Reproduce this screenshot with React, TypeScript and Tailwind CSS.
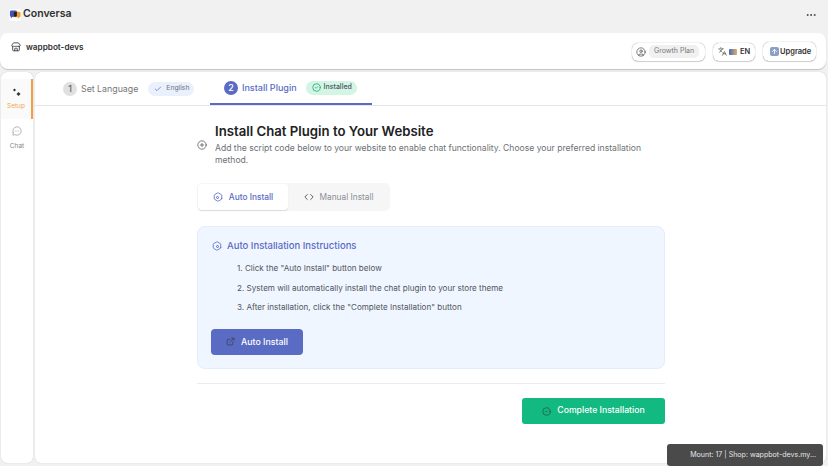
import { Check, CircleCheck, CirclePlus, CircleUser, Code, Ellipsis, ExternalLink, Hexagon, Languages, MessageCircleMore, Store, ArrowUp } from "lucide-react";

const steps = [
  'Click the "Auto Install" button below',
  "System will automatically install the chat plugin to your store theme",
  'After installation, click the "Complete Installation" button',
];

// hex nut icon used on the auto install labels
const NutIcon = ({ size = 10 }: { size?: number }) => (
  <span className="relative flex items-center justify-center" style={{ width: size, height: size }}>
    <Hexagon size={size} strokeWidth={2} />
    <span className="absolute h-[3px] w-[3px] rounded-full border border-current" />
  </span>
);

const App = () => {
  return (
    <div className="relative h-[466px] w-[828px] overflow-hidden bg-[#f1f1f1] font-['Inter',sans-serif] text-[#202223]">
      {/* Top bar */}
      <div className="flex h-[29px] items-center justify-between pl-[9px] pr-[11px]">
        <div className="flex items-center gap-[2px]">
          <svg width="12" height="12" viewBox="0 0 13 13">
            <rect width="13" height="13" rx="3" fill="#fff" />
            <path d="M1 3a1.500 1.500 0 0 1 1.500-1.500H7A1.500 1.500 0 0 1 8.500 3v4A1.500 1.500 0 0 1 7 8.500H4L2 10V8.500A1.500 1.500 0 0 1 1 7z" fill="#3f51c8" />
            <path d="M5 4.500A1.500 1.500 0 0 1 6.500 3h4.500A1.500 1.500 0 0 1 12.500 4.500v3A1.500 1.500 0 0 1 11 9v1.500L9.500 9h-3A1.500 1.500 0 0 1 5 7.500z" fill="#f09a2e" />
            <path d="M5 4.500A1.500 1.500 0 0 1 6.500 3H8.500v4A1.500 1.500 0 0 1 7 8.500H5z" fill="#222" />
          </svg>
          <span className="text-[10.500px] font-semibold leading-none text-[#303030]">Conversa</span>
        </div>
        <Ellipsis size={12} strokeWidth={2} className="text-[#444]" />
      </div>

      {/* Store header */}
      <div className="mt-[4px] flex h-[36px] w-[826px] items-start justify-between rounded-[8px] bg-white pl-[11px] pr-[10px] pt-[7px] shadow-[0_1px_1px_rgba(0,0,0,0.2)]">
        <div className="flex items-center gap-[5px] pt-[1px]">
          <Store size={10} strokeWidth={2} className="text-[#333]" />
          <span className="text-[8.200px] font-semibold text-[#303030]">wappbot-devs</span>
        </div>
        <div className="flex items-center gap-[8px] pt-[2px]">
          <div className="flex h-[18px] w-[73px] items-center gap-[3px] rounded-[6px] bg-white pl-[4px] shadow-[0_0_1px_rgba(0,0,0,0.5),0_1px_1px_rgba(0,0,0,0.15)]">
            <CircleUser size={10} strokeWidth={1.500} className="text-[#333]" />
            <span className="rounded-[5px] bg-[#f0f0f0] px-[5px] py-[1px] text-[7px] text-[#777]">Growth Plan</span>
          </div>
          <div className="flex h-[18px] w-[42px] items-center gap-[2px] rounded-[6px] bg-white pl-[5px] shadow-[0_0_1px_rgba(0,0,0,0.5),0_1px_1px_rgba(0,0,0,0.15)]">
            <Languages size={9} strokeWidth={1.800} className="text-[#444]" />
            <span className="h-[6px] w-[8px] rounded-[1px] bg-gradient-to-r from-[#4a62b8] to-[#e0b050]" />
            <span className="ml-[1px] text-[7.500px] font-semibold text-[#303030]">EN</span>
          </div>
          <div className="flex h-[19px] w-[53px] items-center gap-[1px] rounded-[6px] bg-white pl-[7px] shadow-[0_0_1px_rgba(0,0,0,0.5),0_1px_1px_rgba(0,0,0,0.15)]">
            <span className="flex h-[9px] w-[9px] items-center justify-center rounded-[2px] bg-[#8aa0c8]">
              <ArrowUp size={7} strokeWidth={3} className="text-white" />
            </span>
            <span className="text-[7.500px] font-semibold text-[#303030]">Upgrade</span>
          </div>
        </div>
      </div>

      <div className="mt-[3px] flex h-[391px] gap-[2px] pl-[1px]">
        {/* Sidebar */}
        <div className="w-[32px] rounded-[6px] bg-white pt-[7px] shadow-[0_0_1px_rgba(0,0,0,0.25)]">
          <div className="flex h-[40px] flex-col items-center border-r-2 border-[#f0a040] bg-[#fafafa] pt-[9px]">
            <svg width="9" height="9" viewBox="0 0 9 9" fill="#333">
              <path d="M2.500 0.500 4 2 2.500 3.500 1 2z" />
              <path d="M6.500 4 8.500 6 6.500 8 4.500 6z" />
            </svg>
            <span className="mt-[6px] text-[6.500px] leading-none text-[#eda850]">Setup</span>
          </div>
          <div className="mt-[7px] flex flex-col items-center gap-[7px]">
            <MessageCircleMore size={10} strokeWidth={1.300} className="text-[#777]" />
            <span className="text-[6.500px] leading-none text-[#888]">Chat</span>
          </div>
        </div>

        {/* Main panel */}
        <div className="w-[791px] rounded-[6px] bg-white shadow-[0_0_1px_rgba(0,0,0,0.25)]">
          <div className="flex h-[34px] items-stretch border-b border-[#e6e6e6] pl-[28px]">
            <div className="flex w-[147px] items-center">
              <span className="flex h-[14px] w-[14px] items-center justify-center rounded-full bg-[#e0e0e0] text-[9px] font-medium text-[#666]">1</span>
              <span className="ml-[4px] text-[8.800px] text-[#777]">Set Language</span>
              <span className="ml-[10px] flex h-[14px] items-center gap-[4px] rounded-full bg-[#eaf1fd] pl-[6px] pr-[5px] text-[6.800px] text-[#6b7280]">
                <Check size={8} strokeWidth={2} className="text-[#4f5fb8]" />
                English
              </span>
            </div>
            <div className="flex w-[162px] items-center border-b-2 border-[#5a6bc4] pl-[14px]">
              <span className="flex h-[14px] w-[14px] items-center justify-center rounded-full bg-[#5a6bc4] text-[9px] font-medium text-white">2</span>
              <span className="ml-[4px] text-[9px] font-medium text-[#5a6bc4]">Install Plugin</span>
              <span className="ml-[9px] flex h-[14px] items-center gap-[3px] rounded-full bg-[#d3f5e4] pl-[6px] pr-[5px] text-[7px] font-medium text-[#4b5563]">
                <CircleCheck size={9} strokeWidth={2} className="text-[#12a36f]" />
                Installed
              </span>
            </div>
          </div>

          <div className="ml-[162px] w-[468px] pt-[17px]">
            <div className="flex items-center gap-[7px]">
              <CirclePlus size={10} strokeWidth={1.500} className="text-[#333]" />
              <div>
                <h1 className="ml-[1px] text-[13.200px] font-semibold leading-[17px] text-[#202223]">Install Chat Plugin to Your Website</h1>
                <p className="ml-[1px] mt-[2px] w-[440px] text-[8.580px] leading-[12px] text-[#6d7175]">
                  Add the script code below to your website to enable chat functionality. Choose your preferred installation method.
                </p>
              </div>
            </div>

            <div className="mt-[17px] flex h-[28px] w-[193px] rounded-[5px] bg-[#f6f6f7] p-[1px]">
              <div className="flex w-[90px] items-center justify-center gap-[6px] rounded-[4px] bg-white text-[8.300px] font-medium text-[#5a6bc4] shadow-[0_1px_1px_rgba(0,0,0,0.12)]">
                <NutIcon />
                Auto Install
              </div>
              <div className="flex flex-1 items-center justify-center gap-[6px] text-[8.300px] text-[#8a8f94]">
                <Code size={10} strokeWidth={2} className="text-[#444]" />
                Manual Install
              </div>
            </div>

            <div className="mt-[15px] h-[143px] rounded-[8px] border border-[#e4edfb] bg-[#f0f6ff] pl-[13px] pt-[12px]">
              <div className="flex items-center gap-[5px] pl-[1px] text-[9.500px] font-medium text-[#5a6bc4]">
                <NutIcon />
                Auto Installation Instructions
              </div>
              <ol className="mt-[10px] flex flex-col gap-[9px] pl-[26px] text-[8.100px] leading-[10.500px] text-[#50555b]">
                {steps.map((step, i) => (
                  <li key={i}>{i + 1}. {step}</li>
                ))}
              </ol>
              <button className="mt-[16px] flex h-[26px] w-[92px] items-center justify-center gap-[6px] rounded-[4px] bg-[#5a6bc4] text-[8.800px] font-medium text-white">
                <ExternalLink size={9} strokeWidth={1.500} className="text-[#333]" />
                Auto Install
              </button>
            </div>

            <div className="mt-[14px] border-t border-[#ececec] pt-[14px]">
              <button className="ml-auto flex h-[26px] w-[143px] items-center justify-center gap-[6px] rounded-[3px] bg-[#12b981] text-[8.700px] font-medium text-white">
                <CircleCheck size={9} strokeWidth={1.500} className="text-[#333]" />
                Complete Installation
              </button>
            </div>
          </div>
        </div>
      </div>

      {/* Debug toast */}
      <div className="absolute left-[667px] top-[444px] flex h-[22px] w-[156px] items-center justify-end rounded-[3px] bg-[#4a4a4a] pr-[7px] text-[7.050px] text-[#e4e4e4]">
        Mount: 17 | Shop: wappbot-devs.my...
      </div>
    </div>
  );
};

export default App;
